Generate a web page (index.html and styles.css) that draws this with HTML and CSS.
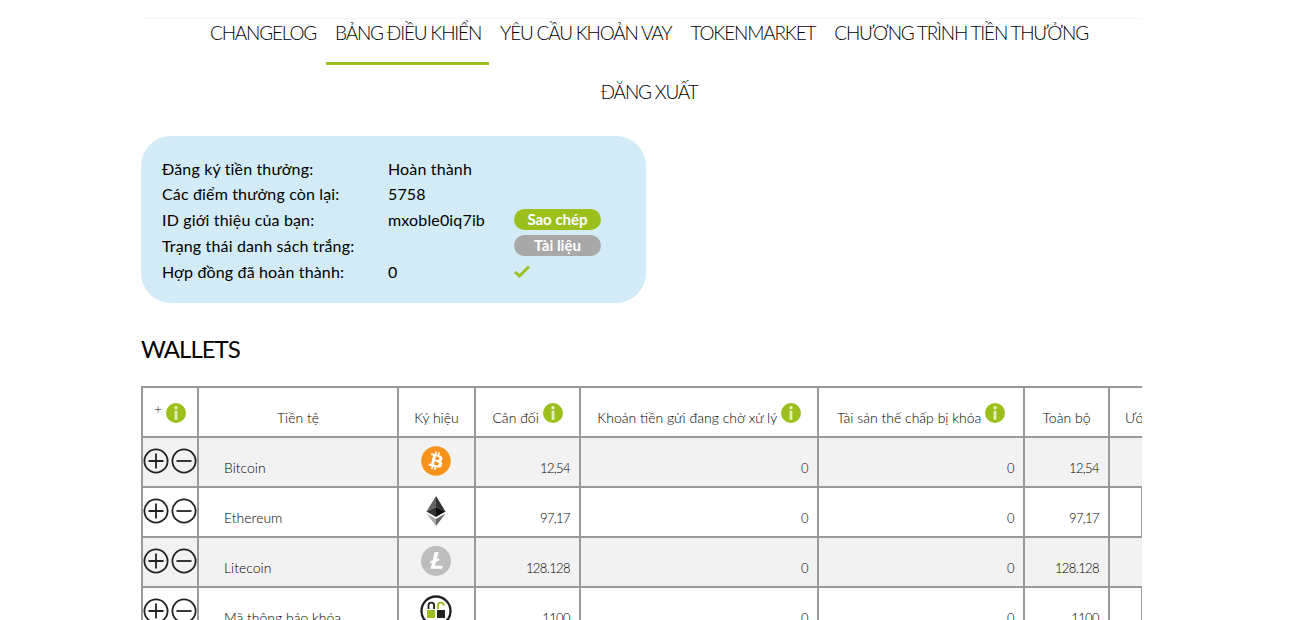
FILE: index.html
```html
<!DOCTYPE html>
<html lang="vi">

<head>
    <meta charset="UTF-8">
    <title>Bảng điều khiển</title>
    <link rel="stylesheet" href="styles.css">
</head>

<body>
    <svg class="defs" width="0" height="0">
        <symbol id="info" viewBox="0 0 20 20">
            <circle cx="10" cy="10" r="10" fill="#9bc01c"/>
            <circle cx="10" cy="4.8" r="1.7" fill="#e4efc0"/>
            <rect x="8.6" y="7.8" width="2.8" height="9" fill="#e4efc0"/>
        </symbol>
        <symbol id="plus" viewBox="0 0 26 26">
            <circle cx="13" cy="13" r="11.6" fill="none" stroke="#222" stroke-width="1.8"/>
            <path d="M13 5.5v15M5.5 13h15" stroke="#222" stroke-width="1.8"/>
        </symbol>
        <symbol id="minus" viewBox="0 0 26 26">
            <circle cx="13" cy="13" r="11.6" fill="none" stroke="#222" stroke-width="1.8"/>
            <path d="M5.5 13h15" stroke="#222" stroke-width="1.8"/>
        </symbol>
    </svg>

    <div class="container">
        <!-- Main menu -->
        <ul class="nav-links">
            <li><a href="#">CHANGELOG</a></li>
            <li class="active"><a href="#">BẢNG ĐIỀU KHIỂN</a></li>
            <li><a href="#">YÊU CẦU KHOẢN VAY</a></li>
            <li><a href="#">TOKENMARKET</a></li>
            <li><a href="#">CHƯƠNG TRÌNH TIỀN THƯỞNG</a></li>
            <li><a href="#">ĐĂNG XUẤT</a></li>
        </ul>

        <!-- Bonus panel -->
        <div class="bonus-panel">
            <span>Đăng ký tiền thưởng:</span><span>Hoàn thành</span><span></span>
            <span>Các điểm thưởng còn lại:</span><span>5758</span><span></span>
            <span>ID giới thiệu của bạn:</span><span>mxoble0iq7ib</span><a class="pill green" href="#">Sao chép</a>
            <span>Trạng thái danh sách trắng:</span><span></span><a class="pill gray" href="#">Tài liệu</a>
            <span>Hợp đồng đã hoàn thành:</span><span>0</span>
            <svg class="check" width="16" height="13" viewBox="0 0 16 13">
                <path d="M1 7l4.500 4L15 1.500" fill="none" stroke="#9bc01c" stroke-width="3"/>
            </svg>
        </div>

        <h2 class="section-title">WALLETS</h2>

        <!-- Wallet table -->
        <div class="table-wrap">
            <table class="wallets">
                <colgroup>
                    <col class="c-actions">
                    <col class="c-name">
                    <col class="c-symbol">
                    <col class="c-balance">
                    <col class="c-pending">
                    <col class="c-locked">
                    <col class="c-total">
                    <col class="c-estimate">
                </colgroup>
                <thead>
                    <tr>
                        <th><span class="up">+</span> <svg class="info"><use href="#info"/></svg></th>
                        <th>Tiền tệ</th>
                        <th>Ký hiệu</th>
                        <th>Cân đối <svg class="info"><use href="#info"/></svg></th>
                        <th>Khoản tiền gửi đang chờ xử lý <svg class="info"><use href="#info"/></svg></th>
                        <th>Tài sản thế chấp bị khóa <svg class="info"><use href="#info"/></svg></th>
                        <th>Toàn bộ</th>
                        <th class="left">Ước tính</th>
                    </tr>
                </thead>
                <tbody>
                    <tr>
                        <td class="actions"><svg class="act"><use href="#plus"/></svg><svg class="act"><use href="#minus"/></svg></td>
                        <td class="name">Bitcoin</td>
                        <td class="symbol">
                            <svg width="32" height="32" viewBox="-1 -1 26 26">
                                <circle cx="12" cy="12" r="11" fill="#fff"/>
                                <path fill="#f7931a" d="M23.638 14.904c-1.602 6.43-8.113 10.34-14.542 8.736C2.67 22.05-1.244 15.525.362 9.105 1.962 2.67 8.475-1.243 14.9.358c6.43 1.605 10.342 8.115 8.738 14.548v-.002zm-6.35-4.613c.24-1.59-.974-2.45-2.64-3.03l.54-2.153-1.315-.33-.525 2.107c-.345-.087-.705-.167-1.064-.25l.526-2.127-1.32-.33-.54 2.165c-.285-.067-.565-.132-.84-.2l-1.815-.45-.35 1.407s.975.225.955.236c.535.136.63.486.615.766l-1.477 5.92c-.075.166-.24.406-.614.314.015.02-.96-.24-.96-.24l-.66 1.51 1.71.426.93.242-.54 2.19 1.32.327.54-2.17c.36.1.705.19 1.05.273l-.51 2.154 1.32.33.545-2.19c2.24.427 3.93.257 4.64-1.774.57-1.637-.03-2.58-1.217-3.196.854-.193 1.5-.76 1.68-1.93h.01zm-3.01 4.22c-.404 1.64-3.157.75-4.05.53l.72-2.9c.896.23 3.757.67 3.33 2.37zm.41-4.24c-.37 1.49-2.662.735-3.405.55l.654-2.64c.744.18 3.137.524 2.75 2.084v.006z"/>
                            </svg>
                        </td>
                        <td class="num">12,54</td>
                        <td class="num">0</td>
                        <td class="num">0</td>
                        <td class="num">12,54</td>
                        <td></td>
                    </tr>
                    <tr>
                        <td class="actions"><svg class="act"><use href="#plus"/></svg><svg class="act"><use href="#minus"/></svg></td>
                        <td class="name">Ethereum</td>
                        <td class="symbol">
                            <svg width="32" height="32" viewBox="0 0 32 32">
                                <polygon points="16,1 6.500,16.500 16,12" fill="#666"/>
                                <polygon points="16,1 25.500,16.500 16,12" fill="#333"/>
                                <polygon points="16,12 6.500,16.500 16,22" fill="#333"/>
                                <polygon points="16,12 25.500,16.500 16,22" fill="#111"/>
                                <polygon points="6.500,18.500 16,31 16,24" fill="#aaa"/>
                                <polygon points="25.500,18.500 16,31 16,24" fill="#666"/>
                            </svg>
                        </td>
                        <td class="num">97,17</td>
                        <td class="num">0</td>
                        <td class="num">0</td>
                        <td class="num">97,17</td>
                        <td class="edge"></td>
                    </tr>
                    <tr>
                        <td class="actions"><svg class="act"><use href="#plus"/></svg><svg class="act"><use href="#minus"/></svg></td>
                        <td class="name">Litecoin</td>
                        <td class="symbol">
                            <svg width="32" height="32" viewBox="0 0 32 32">
                                <circle cx="16" cy="16" r="15" fill="#bdbdbd"/>
                                <path d="M14.500 7h4.200l-1.900 7.200 2.800-1-.7 2.500-2.900 1-1.100 4h8l-.8 3H10.500l1.700-6.100-2.300.8.6-2.300 2.400-.9z" fill="#fff"/>
                            </svg>
                        </td>
                        <td class="num">128.128</td>
                        <td class="num">0</td>
                        <td class="num">0</td>
                        <td class="num">128.128</td>
                        <td></td>
                    </tr>
                    <tr>
                        <td class="actions"><svg class="act"><use href="#plus"/></svg><svg class="act"><use href="#minus"/></svg></td>
                        <td class="name">Mã thông báo khóa</td>
                        <td class="symbol">
                            <svg width="32" height="32" viewBox="0 0 32 32">
                                <circle cx="16" cy="16" r="14.500" fill="#fff" stroke="#222" stroke-width="2.400"/>
                                <path d="M8.500 14v-3.500a2.800 2.800 0 0 1 5.600 0V14" fill="none" stroke="#222" stroke-width="1.800"/>
                                <path d="M18 14v-3.500a2.800 2.800 0 0 1 5.600 0" fill="none" stroke="#9bc01c" stroke-width="1.800"/>
                                <rect x="7" y="15" width="8" height="8" fill="#9bc01c"/>
                                <rect x="17" y="15" width="8" height="8" fill="#222"/>
                            </svg>
                        </td>
                        <td class="num">1100</td>
                        <td class="num">0</td>
                        <td class="num">0</td>
                        <td class="num">1100</td>
                        <td class="edge"></td>
                    </tr>
                </tbody>
            </table>
        </div>
    </div>
</body>

</html>
```

FILE: styles.css
```css
* {
    margin: 0;
    padding: 0;
    box-sizing: border-box;
}

:root {
    --green: #9bc01c;
    --line: #999;
}

html,
body {
    height: 620px;
    overflow: hidden;
}

body {
    background-color: #fff;
    color: #000;
    font-family: 'Lato', 'Liberation Serif', sans-serif;
}

.defs {
    position: absolute;
}

.container {
    width: 1000px;
    margin-left: 141px;
    padding-top: 18px;
}

/* Menu */
.nav-links {
    list-style: none;
    display: flex;
    flex-wrap: wrap;
    justify-content: center;
    row-gap: 13px;
    padding-left: 15px;
    border-top: 1px solid #f5f5f5;
}

.nav-links li {
    height: 46px;
    padding: 0 8px 0 9px;
    margin: 0 1px;
    border-bottom: 3px solid transparent;
}

.nav-links li.active {
    border-bottom-color: var(--green);
}

.nav-links a {
    display: block;
    line-height: 28px;
    color: #000;
    text-decoration: none;
    font-size: 19px;
    font-weight: 300;
    letter-spacing: -1.2px;
}

/* Bonus panel */
.bonus-panel {
    display: grid;
    grid-template-columns: 226px 126px 87px;
    grid-template-rows: 26px 25px 26px 27px 25px;
    align-items: center;
    width: 505px;
    height: 167px;
    margin-top: 12px;
    padding: 19px 21px;
    background-color: #d2ebf7;
    border-radius: 30px;
    font-size: 16px;
    letter-spacing: 0.15px;
}

.pill {
    display: block;
    height: 21px;
    line-height: 20px;
    border-radius: 11px;
    color: #fff;
    font-size: 15px;
    font-weight: 700;
    letter-spacing: 0;
    text-align: center;
    text-decoration: none;
}

.green {
    background-color: var(--green);
}

.gray {
    background-color: #a8a8a8;
}

.section-title {
    margin-top: 31px;
    font-size: 24px;
    font-weight: 400;
    line-height: 30px;
    letter-spacing: -1px;
}

/* Wallet table */
.table-wrap {
    width: 1001px;
    margin-top: 22px;
    overflow: hidden;
}

.wallets {
    width: 1150px;
    table-layout: fixed;
    border-collapse: collapse;
    font-size: 14px;
    font-weight: 300;
    color: #000;
}

.c-actions { width: 56px; }
.c-name { width: 200px; }
.c-symbol { width: 77px; }
.c-balance { width: 105px; }
.c-pending { width: 238px; }
.c-locked { width: 206px; }
.c-total { width: 85px; }
.c-estimate { width: 183px; }

.wallets th,
.wallets td {
    height: 50px;
    border: 2px solid var(--line);
}

.wallets th {
    padding-bottom: 8px;
    line-height: 20px;
    font-weight: 300;
    white-space: nowrap;
    vertical-align: bottom;
}

.wallets th.left {
    text-align: left;
    padding-left: 15px;
}

.wallets tbody tr:nth-child(odd) {
    background-color: #f2f2f2;
}

.wallets td {
    padding: 10px 8px 0;
}

/* thin line where the clipped column ends, white rows only */
.wallets td.edge {
    position: relative;
}

.wallets td.edge::after {
    content: "";
    position: absolute;
    top: 0;
    bottom: 0;
    left: 31px;
    width: 1px;
    background-color: var(--line);
}

.up {
    font-size: 13px;
    position: relative;
    top: -9px;
}

.info {
    width: 20px;
    height: 20px;
    margin-top: -14px;
    vertical-align: 0;
}

.wallets td.actions {
    padding: 0;
    white-space: nowrap;
    vertical-align: top;
}

.act {
    width: 26px;
    height: 26px;
    margin: 10px 2px 0 0;
}

.wallets td.name {
    padding-left: 25px;
}

.wallets td.symbol {
    padding: 0 1px 0 0;
    text-align: center;
}

.wallets td.symbol svg {
    display: block;
    margin: 0 auto 2px;
}

.wallets td.num {
    padding: 12px 9px 0 0;
    text-align: right;
    font-size: 13px;
    letter-spacing: -0.6px;
}
```
